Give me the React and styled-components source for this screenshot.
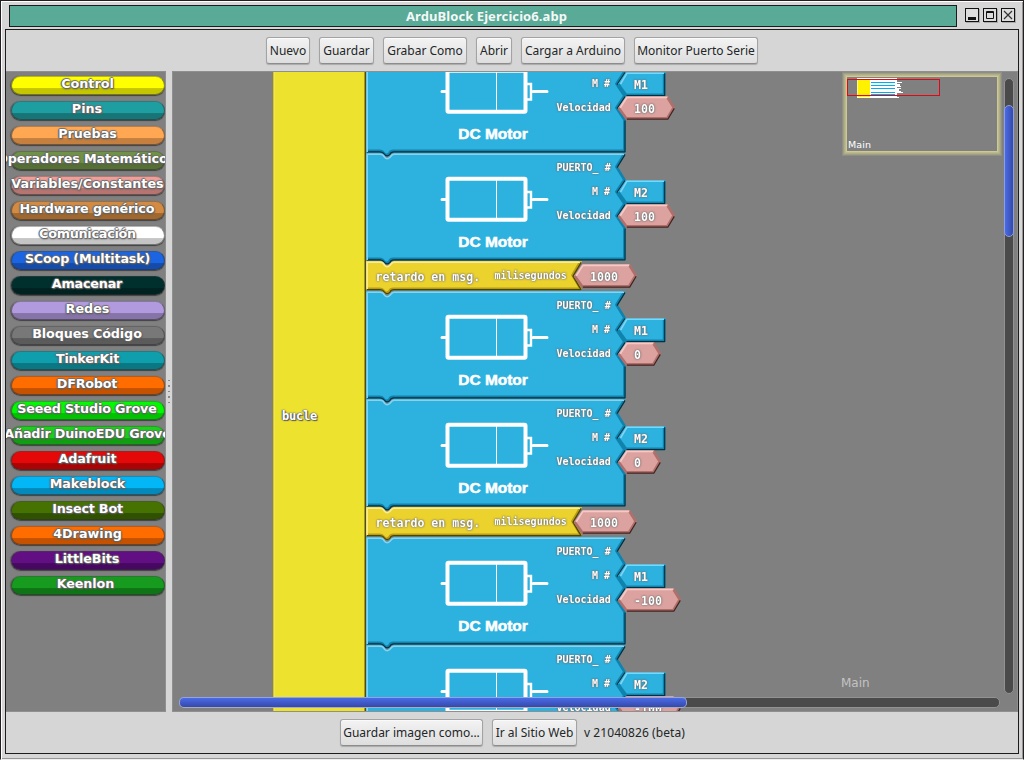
import React from "react";
import styled, { createGlobalStyle } from "styled-components";

const Global = createGlobalStyle`
  * { box-sizing: border-box; }
  body { margin: 0; background: #d6d6d6; overflow: hidden; }
`;

const Window = styled.div`
  width: 1024px;
  height: 760px;
  display: flex;
  flex-direction: column;
  background: #d6d6d6;
  border: 1px solid #231f20;
  border-bottom: 1px solid #eee;
  box-shadow: inset 1px 1px 0 #fff, inset -1px -1px 0 #969696;
  padding: 4px 4px 5px;
  font-family: "Noto Sans", "Open Sans", sans-serif;
  color: #232627;
`;

const TitleRow = styled.header`
  display: flex;
  height: 22px;
  padding-left: 4px;
  gap: 8px;
`;

const TitleBar = styled.div`
  width: 948px;
  height: 22px;
  border: 1px solid #1c1c1c;
  background: #5aaa98;
  color: #f4f8f7;
  font-size: 13px;
  font-weight: 700;
  line-height: 20px;
  padding-left: 396px;
  letter-spacing: 0.08px;
  white-space: nowrap;
`;

const WindowButtons = styled.div`
  display: flex;
  gap: 4px;
  padding-top: 3px;
`;

const WindowButton = styled.span`
  width: 14px;
  height: 14px;
  border: 1px solid #111;
  background: #dcdcdc;
  box-shadow: 1px 1px 0 #aaa;
  svg { display: block; }
`;

const Frame = styled.main`
  margin-top: 2px;
  width: 1014px;
  height: 725px;
  border: 1px solid #1c1c1c;
  display: flex;
  flex-direction: column;
`;

const Toolbar = styled.div`
  display: flex;
  justify-content: center;
  align-items: center;
  gap: 9px;
  height: 41px;
  flex: none;
`;

const Footer = styled(Toolbar)`
  justify-content: flex-start;
  padding-left: 334px;
  font-size: 12px;
`;

const Button = styled.button`
  width: ${(p) => p.$w}px;
  height: 27px;
  padding: 0;
  border: 1px solid #a3a3a3;
  border-bottom-color: #8c8c8c;
  border-radius: 3px;
  background: linear-gradient(#f3f3f3, #dedede);
  box-shadow: 0 1px 1px #aaa, inset 0 1px 0 #fafafa;
  font: 12px "Noto Sans", "Open Sans", sans-serif;
  color: #232627;
  white-space: nowrap;
`;

const Version = styled.span`
  margin-left: -2px;
  letter-spacing: 0.07px;
`;

const Body = styled.div`
  display: flex;
  height: 641px;
  flex: none;
`;

const Sidebar = styled.nav`
  width: 160px;
  background: #808080;
  border: 1px solid #8f8f8f;
  border-left: 0;
  display: flex;
  flex-direction: column;
  gap: 5px;
  padding: 4px 0 0 1px;
  overflow: hidden;
`;

const Category = styled.div`
  width: 158px;
  height: 20px;
  padding-left: 4px;
`;

const Pill = styled.div`
  width: 154px;
  height: 19px;
  border-radius: 10px;
  border: 1px solid rgba(50, 50, 50, 0.55);
  border-top-color: rgba(70, 70, 70, 0.4);
  background: linear-gradient(${(p) => p.$c} 0 63%, ${(p) => p.$d} 66% 100%);
  background-origin: border-box;
  box-shadow: 0 1px 1px rgba(40, 40, 40, 0.7), -1px 0 1px rgba(60, 60, 60, 0.5);
  display: flex;
  justify-content: center;
`;

const PillText = styled.span`
  flex: none;
  font: bold 12.75px/13px "DejaVu Sans", sans-serif;
  letter-spacing: ${(p) => p.$track || 0}px;
  color: #fff;
  white-space: nowrap;
  margin-left: ${(p) => -1 + 2 * (p.$shift || 0)}px;
  text-shadow: 1px 1px 1px #666, 0 0 1px #555, -1px 0 1px #666, 0 1px 2px #555, 0 -1px 1px #777;
`;

const Splitter = styled.div`
  width: 6px;
  display: flex;
  flex-direction: column;
  align-items: center;
  justify-content: center;
  gap: 4px;
`;

const Grip = styled.i`
  width: 2px;
  height: 1.5px;
  background: #888;
`;

const Workspace = styled.section`
  position: relative;
  width: 846px;
  background: #808080;
  border: 1px solid #8f8f8f;
  overflow: hidden;
  display: flex;
  padding-left: 100px;
`;

const Loop = styled.div`
  width: 93px;
  height: 640px;
  flex: none;
  background: #ede22d;
  border-left: 1px solid #d8c81c;
  box-shadow: inset 1px 0 0 #f0e650, inset -1px 0 0 #4f4a10, inset -2px 0 0 #a39a17;
  display: flex;
  align-items: center;
  padding: 48px 0 0 8px;
  color: #fff;
  font: bold 12px "DejaVu Sans Mono", monospace;
  letter-spacing: -0.2px;
  text-shadow: 1px 1px 1px #555, 0 0 1px #666, -1px 0 1px #777, 0 0 2px #777;
`;

const Stack = styled.div`
  margin-top: -27px;
  display: flex;
  flex-direction: column;
`;

const BlockSvg = styled.svg`
  display: block;
  flex: none;
  overflow: visible;
`;

const Label = styled.text`
  font: bold ${(p) => (p.$small ? 10 : 11.6)}px "DejaVu Sans Mono", monospace;
  fill: #fff;
  white-space: pre;
  filter: drop-shadow(0.7px 0.7px 0.4px #666) drop-shadow(0 0 0.8px #666);
`;

const MotorName = styled.text`
  font: bold 14px "Liberation Sans", sans-serif;
  fill: #fff;
  stroke: #fff;
  stroke-width: 0.5px;
`;

const MiniMap = styled.div`
  position: absolute;
  left: 669px;
  top: 0;
  width: 160px;
  height: 84px;
  border: 1px solid #8e8e84;
  box-shadow: inset 0 0 0 1px #9f9f86, inset 0 0 0 2px #b0ae87, inset 0 0 0 3px #bcb98b, inset 0 0 0 4px #ccc995;
  svg { display: block; }
`;

const MiniLabel = styled.text`
  font: 9.5px "DejaVu Sans", sans-serif;
  fill: #fff;
`;

const PageLabel = styled.span`
  position: absolute;
  left: 668px;
  top: 604px;
  font: 12px/15px "DejaVu Sans", sans-serif;
  color: #c3c3c3;
`;

const Track = styled.div`
  position: absolute;
  background: #4a4a4a;
  border: 1px solid #929292;
  border-radius: 5px;
`;

const VTrack = styled(Track)`
  left: 831px;
  top: 6px;
  width: 10px;
  height: 616px;
  padding-top: 26px;
`;

const HTrack = styled(Track)`
  left: 6px;
  top: 625px;
  width: 821px;
  height: 11px;
`;

const VThumb = styled.div`
  width: 10px;
  height: 132px;
  margin-left: -1px;
  border: 1px solid #8f9fdc;
  border-radius: 5px;
  background: linear-gradient(90deg, #4a6be8, #3549a8);
`;

const HThumb = styled.div`
  width: 508px;
  height: 11px;
  margin: -1px 0 0 -1px;
  border: 1px solid #93a4e4;
  border-bottom-color: #a9acba;
  border-radius: 5px;
  background: linear-gradient(#4a6be8, #3549a8);
`;

// label, upper colour, lower colour, horizontal shift, letter spacing
const categories = [
  ["Control", "#ffff00", "#c5c500"],
  ["Pins", "#1f9ea2", "#177578", -0.5],
  ["Pruebas", "#ffa752", "#c57f3f"],
  ["Operadores Matemáticos", "#709246", "#556f35", -1.5, -0.12],
  ["Variables/Constantes", "#ee9f99", "#b67571"],
  ["Hardware genérico", "#d38b43", "#a0682f", -0.5, -0.12],
  ["Comunicación", "#ffffff", "#c5c5c5", 0, -0.25],
  ["SCoop (Multitask)", "#1c65e2", "#154cab", 0, -0.2],
  ["Amacenar", "#00302d", "#002220", -0.5, -0.2],
  ["Redes", "#b29ade", "#8673a8"],
  ["Bloques Código", "#787878", "#5b5b5b", -0.5, -0.12],
  ["TinkerKit", "#0f9eac", "#0b7782", 0, -0.3],
  ["DFRobot", "#ff6c00", "#c55200", -0.5, -0.2],
  ["Seeed Studio Grove", "#00fa00", "#00c400", -0.5, -0.15],
  ["Añadir DuinoEDU Grove", "#19d219", "#129e12", 0, -0.18],
  ["Adafruit", "#e40808", "#aa0404", 0, -0.15],
  ["Makeblock", "#03b7f6", "#038abb", 0, -0.1],
  ["Insect Bot", "#457200", "#305100", 0, -0.2],
  ["4Drawing", "#ff6c00", "#c55200"],
  ["LittleBits", "#620f84", "#470862", -0.5, -0.1],
  ["Keenlon", "#169b1e", "#0f7416", -2, -0.1],
];

const BLUE = { fill: "#2db1df", light: "#86d3f0", mid: "#0f83ad", dark: "#06303f" };
const YELLOW = { fill: "#ecd22d", light: "#f8ec96", mid: "#b89d12", dark: "#4f4408" };
const PINK = { fill: "#dba29f", light: "#f6c9c6", mid: "#b06f6b", dark: "#3d2422" };

const NOTCH = "H14 Q17 0 18.5 3 Q21 6 24 3 Q26 0 28 0";
const NOTCH_LIGHT = "H14 Q17 1.3 18.5 4.2 Q21 7.2 24 4.2 Q26 1.3 28 1.3";
const plug = (y) => `H28 Q25 ${y} 24 ${y + 2.5} Q21 ${y + 5.5} 18.5 ${y + 2.5} Q17 ${y} 14 ${y} H1`;

function Bevel({ c, shape, light, dark, edge = dark }) {
  return (
    <g strokeLinejoin="round" fill="none">
      <path d={shape} fill={c.fill} />
      <path d={dark} stroke={c.mid} strokeWidth="2.6" transform="translate(-.6 -.3)" />
      <path d={edge} stroke={c.dark} strokeWidth="1.2" transform="translate(0 .6)" />
      <path d={light} stroke={c.light} strokeWidth="1.6" />
    </g>
  );
}

function Value({ x, y, end, text, tx }) {
  return (
    <g>
      <Bevel
        c={PINK}
        shape={`M${x} ${y + 11.5}L${x + 8} ${y}H${end - 7}L${end} ${y + 11.5}L${end - 7} ${y + 23}H${x + 8}Z`}
        light={`M${x + 2} ${y + 11.5}L${x + 8.6} ${y + 1.2}H${end - 7.5}`}
        dark={`M${end - 7} ${y + 1}L${end - 0.5} ${y + 11.5}L${end - 7} ${y + 22.3}H${x + 8.5}L${x + 1} ${y + 12}`}
        edge={`M${end - 0.5} ${y + 11.5}L${end - 7} ${y + 22.3}H${x + 8.5}`}
      />
      <Label x={tx} y={y + 17}>{text}</Label>
    </g>
  );
}

function MotorBlock({ port, speed, end }) {
  return (
    <BlockSvg width="260" height="108">
      <Bevel
        c={BLUE}
        shape={`M0 0${NOTCH}H259.5L251.5 14L259.5 27V107${plug(107)}H0Z`}
        light={`M1.2 107V1.3${NOTCH_LIGHT}H258`}
        dark={`M259 1L251 14L259 27L251 39L259 51L251 63L259 75V106.2${plug(106.2)}`}
        edge={`M259 1L251 14M259 27L251 39M259 51L251 63M259 75V106.2${plug(106.2)}`}
      />
      <g fill="none" stroke="#fff" strokeLinecap="round">
        <rect x="81.5" y="25.7" width="78" height="41" rx="1" strokeWidth="4" />
        <path d="M130.5 25V67" strokeWidth="1" />
        <path d="M76 46.5H80M167 46.5H181" strokeWidth="3" />
        <path d="M161 39H165V54.5H161" strokeWidth="2.4" />
      </g>
      <MotorName x="92.3" y="94.1" textLength="69.5" lengthAdjust="spacingAndGlyphs">DC Motor</MotorName>
      <Label $small x="190.5" y="18">PUERTO_ #</Label>
      <Label $small x="226" y="42">M #</Label>
      <Label $small x="190.5" y="66">Velocidad</Label>
      <Bevel
        c={BLUE}
        shape="M260 27H299.5V50.5H260L252 39Z"
        light="M254.5 39L261 28.2H298"
        dark="M298.7 28V50H260.5L253 39.5"
        edge="M298.7 28V50H260.5"
      />
      <Label x="268" y="44">{port}</Label>
      <Value x={252.3} y={51.3} end={end - 0.7} text={speed} tx={268} />
    </BlockSvg>
  );
}

function DelayBlock() {
  return (
    <BlockSvg width="260" height="30">
      <Bevel
        c={YELLOW}
        shape={`M0 0${NOTCH}H216L207.5 14.5L216 28.5${plug(28.5)}H0Z`}
        light={`M1.2 28V1.3${NOTCH_LIGHT}H214`}
        dark={`M215 1L207 14.5L215 28${plug(28)}`}
      />
      <Label x="9.5" y="20">retardo en msg.</Label>
      <Label $small x="128.5" y="18">milisegundos</Label>
      <Value x={208.3} y={3.2} end={270.7} text="1000" tx={224} />
    </BlockSvg>
  );
}

const blocks = [
  ["M1", "100", 309.5],
  ["M2", "100", 309.5],
  null,
  ["M1", "0", 295.5],
  ["M2", "0", 295.5],
  null,
  ["M1", "-100", 315.5],
  ["M2", "-100", 315.5],
];

function Overview() {
  return (
    <MiniMap>
      <svg width="157" height="81">
        <path d="M14 5H54V24H56V25H14Z" fill="#fff" />
        <path d="M54 9H59V10H54ZM54 11H57V13H58V14H54ZM54 15H58V16H56V18H58V19H60V20H54Z" fill="#fff" />
        <path d="M14.5 7H27V24H14.5Z" fill="#fff200" />
        <path d="M28 9.5H52M28 12.5H52M28 15.5H52M28 19.5H52M28 21.5H52" stroke="#00aeef" />
        <rect x="4.5" y="6.5" width="92" height="16" fill="none" stroke="#e30613" />
        <MiniLabel x="5" y="75" textLength="23">Main</MiniLabel>
      </svg>
    </MiniMap>
  );
}

const tools = [
  ["Nuevo", 44],
  ["Guardar", 55],
  ["Grabar Como", 84],
  ["Abrir", 36],
  ["Cargar a Arduino", 104],
  ["Monitor Puerto Serie", 124],
];

export default function App() {
  return (
    <Window>
      <Global />
      <TitleRow>
        <TitleBar>ArduBlock Ejercicio6.abp</TitleBar>
        <WindowButtons>
          <WindowButton><svg width="12" height="12"><path d="M2 8H10V11H2Z" fill="#111" /></svg></WindowButton>
          <WindowButton><svg width="12" height="12" fill="none" stroke="#111"><path d="M2.5 2.5H9.5V9.5H2.5ZM2 3.5H10" /></svg></WindowButton>
          <WindowButton><svg width="12" height="12" stroke="#333" strokeWidth="1.2"><path d="M2 2L10 10M10 2L2 10" /></svg></WindowButton>
        </WindowButtons>
      </TitleRow>
      <Frame>
        <Toolbar>
          {tools.map(([t, w]) => <Button key={t} $w={w}>{t}</Button>)}
        </Toolbar>
        <Body>
          <Sidebar>
            {categories.map(([t, c, d, shift, track]) => (
              <Category key={t}>
                <Pill $c={c} $d={d}><PillText $shift={shift} $track={track}>{t}</PillText></Pill>
              </Category>
            ))}
          </Sidebar>
          <Splitter>{[0, 1, 2, 3, 4].map((i) => <Grip key={i} />)}</Splitter>
          <Workspace>
            <Loop>bucle</Loop>
            <Stack>
              {blocks.map((b, i) =>
                b ? <MotorBlock key={i} port={b[0]} speed={b[1]} end={b[2]} /> : <DelayBlock key={i} />
              )}
            </Stack>
            <Overview />
            <PageLabel>Main</PageLabel>
            <VTrack><VThumb /></VTrack>
            <HTrack><HThumb /></HTrack>
          </Workspace>
        </Body>
        <Footer>
          <Button $w={143}>Guardar imagen como...</Button>
          <Button $w={85}>Ir al Sitio Web</Button>
          <Version>v 21040826 (beta)</Version>
        </Footer>
      </Frame>
    </Window>
  );
}
